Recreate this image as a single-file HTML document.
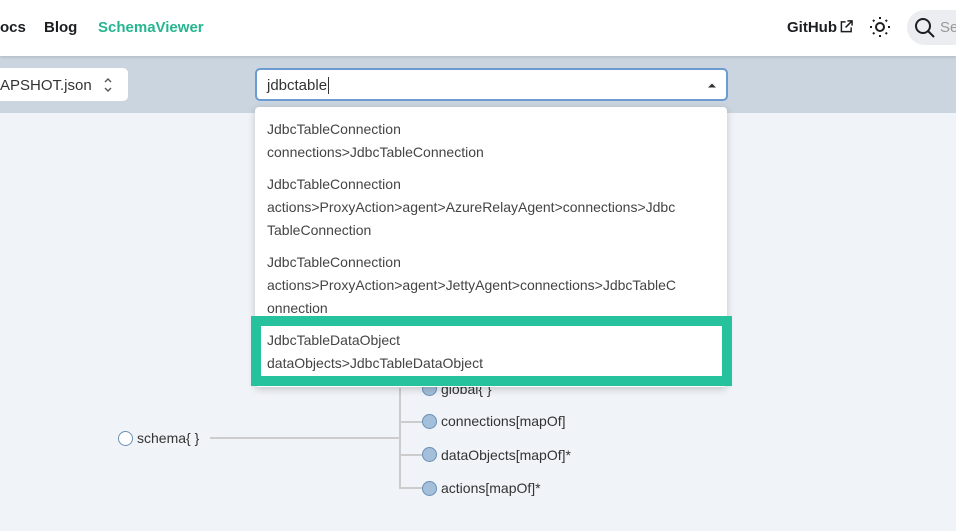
<!DOCTYPE html>
<html><head><meta charset="utf-8"><style>
*{box-sizing:border-box;margin:0;padding:0}
body{width:956px;height:531px;overflow:hidden;background:#f0f3f8;font-family:"Liberation Sans",sans-serif;position:relative;color:#1c1e21}
.nav{position:absolute;left:0;top:0;width:956px;height:56px;background:#fff;box-shadow:0 1px 3px rgba(0,0,0,.15);z-index:2}
.nav span{position:absolute;top:19px;font-size:15px;font-weight:bold;color:#1c1e21}
.band{position:absolute;left:0;top:56px;width:956px;height:57px;background:#cbd5df}
.sel{position:absolute;left:-10px;top:68px;width:138px;height:33px;background:#fff;border-radius:5px;font-size:15px;padding:9px 0 0 10px;color:#333}
.inp{position:absolute;left:255px;top:68px;width:473px;height:33px;background:#fff;border:2px solid #6b9bd1;border-radius:5px;font-size:15px;padding:7px 0 0 10px;color:#333}
.dd{position:absolute;left:255px;top:107px;width:472px;height:280px;background:#fff;border-radius:4px;box-shadow:0 2px 8px rgba(0,0,0,.2);z-index:3;font-size:14px;color:#444;line-height:23px}
.it{position:absolute;left:12px;width:450px}
.hl{position:absolute;left:251px;top:316px;width:481px;height:70px;border:10px solid #26c29e;background:#fff;z-index:4;font-size:14px;color:#444;line-height:23px;padding:3px 0 0 6px}
.n{position:absolute;font-size:14px;color:#333}
.c{position:absolute;width:15px;height:15px;border-radius:50%;border:1px solid #6a8fb8;background:#a3bfd9}
.l{position:absolute;background:#ccc}
</style></head><body>
<div class="nav">
<span style="left:0">ocs</span><span style="left:44px">Blog</span><span style="left:98px;color:#26b591">SchemaViewer</span>
<span style="left:787px">GitHub</span>
<svg style="position:absolute;left:840px;top:20px" width="13" height="13" viewBox="0 0 14 14" fill="none" stroke="#1c1e21" stroke-width="1.6"><path d="M6 2H1.5v10.5H12V8M8 1h5v5M13 1L6 8"/></svg>
<svg style="position:absolute;left:869px;top:16px" width="22" height="22" viewBox="0 0 22 22" stroke="#1c1e21" stroke-width="2" fill="none"><circle cx="11" cy="11" r="4"/><path d="M11 1v2M11 19v2M1 11h2M19 11h2M4 4l1.4 1.4M16.6 16.6L18 18M4 18l1.4-1.4M16.6 5.4L18 4"/></svg>
<div style="position:absolute;left:907px;top:10px;width:80px;height:35px;border-radius:18px;background:#ebedf0"></div>
<svg style="position:absolute;left:914px;top:17px" width="22" height="22" viewBox="0 0 22 22" fill="none" stroke="#1c1e21" stroke-width="2"><circle cx="9" cy="9" r="7"/><path d="M14 14l6 6"/></svg>
<span style="left:940px;font-weight:normal;color:#999">Se</span>
</div>
<div class="band"></div>
<div class="sel">APSHOT.json
<svg style="position:absolute;left:113px;top:9px" width="10" height="16" viewBox="0 0 10 16" fill="none" stroke="#555" stroke-width="1.4"><path d="M2 5l3-3 3 3M2 11l3 3 3-3"/></svg></div>
<div class="inp">jdbctable<span style="border-left:1px solid #333;margin-left:1px"></span>
<svg style="position:absolute;left:450px;top:12px" width="10" height="6" viewBox="0 0 10 6"><path d="M1 5.5L5 1.5 9 5.5Z" fill="#333"/></svg></div>
<div class="dd">
<div class="it" style="top:11px">JdbcTableConnection<br>connections&gt;JdbcTableConnection</div>
<div class="it" style="top:66px">JdbcTableConnection<br>actions&gt;ProxyAction&gt;agent&gt;AzureRelayAgent&gt;connections&gt;Jdbc<br>TableConnection</div>
<div class="it" style="top:144px">JdbcTableConnection<br>actions&gt;ProxyAction&gt;agent&gt;JettyAgent&gt;connections&gt;JdbcTableC<br>onnection</div>
</div>
<div class="hl">JdbcTableDataObject<br>dataObjects&gt;JdbcTableDataObject</div>
<div class="l" style="left:210px;top:437px;width:190px;height:2px"></div>
<div class="l" style="left:399px;top:388px;width:2px;height:101px"></div>
<div class="l" style="left:400px;top:421px;width:24px;height:2px"></div>
<div class="l" style="left:400px;top:454px;width:24px;height:2px"></div>
<div class="l" style="left:400px;top:487px;width:24px;height:2px"></div>
<div class="c" style="left:118px;top:431px;background:#fff"></div><div class="n" style="left:137px;top:430px">schema{ }</div>
<div class="c" style="left:422px;top:381px"></div><div class="n" style="left:441px;top:381px">global{ }</div>
<div class="c" style="left:422px;top:414px"></div><div class="n" style="left:441px;top:413px">connections[mapOf]</div>
<div class="c" style="left:422px;top:447px"></div><div class="n" style="left:441px;top:447px">dataObjects[mapOf]*</div>
<div class="c" style="left:422px;top:481px"></div><div class="n" style="left:441px;top:480px">actions[mapOf]*</div>
</body></html>
